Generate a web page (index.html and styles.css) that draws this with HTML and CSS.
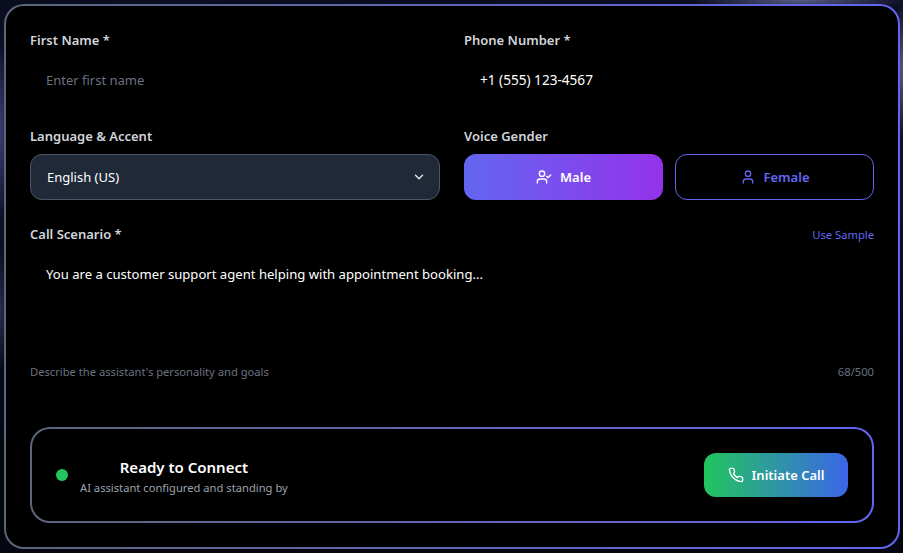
FILE: index.html
```html
<!DOCTYPE html>
<html lang="en">
<head>
    <meta charset="UTF-8">
    <meta name="viewport" content="width=device-width, initial-scale=1.0">
    <title>Call setup</title>
    <link rel="stylesheet" href="styles.css">
</head>
<body>
    <main class="panel">
        <div class="form-grid">
            <div class="field">
                <label class="field__label" for="firstName">First Name *</label>
                <input class="field__input" id="firstName" type="text" placeholder="Enter first name">
            </div>
            <div class="field">
                <label class="field__label" for="phone">Phone Number *</label>
                <input class="field__input field__input--phone" id="phone" type="text" value="+1 (555) 123-4567">
            </div>
            <div class="field">
                <label class="field__label" for="language">Language &amp; Accent</label>
                <div class="select-wrap">
                    <select class="select" id="language">
                        <option>English (US)</option>
                    </select>
                    <svg class="select-wrap__chevron" viewBox="0 0 24 24" width="14" height="14" fill="none" stroke="currentColor" stroke-width="2.4" stroke-linecap="round" stroke-linejoin="round"><path d="m6 9 6 6 6-6"/></svg>
                </div>
            </div>
            <div class="field">
                <span class="field__label">Voice Gender</span>
                <div class="gender">
                    <button class="gender__btn gender__btn--active" type="button">
                        <svg viewBox="0 0 24 24" width="16" height="16" fill="none" stroke="currentColor" stroke-width="2" stroke-linecap="round" stroke-linejoin="round"><path d="M16 21v-2a4 4 0 0 0-4-4H6a4 4 0 0 0-4 4v2"/><circle cx="9" cy="7" r="4"/><path d="m16 11 2 2 4-4"/></svg>
                        Male
                    </button>
                    <button class="gender__btn" type="button">
                        <svg viewBox="0 0 24 24" width="16" height="16" fill="none" stroke="currentColor" stroke-width="2" stroke-linecap="round" stroke-linejoin="round"><path d="M19 21v-2a4 4 0 0 0-4-4H9a4 4 0 0 0-4 4v2"/><circle cx="12" cy="7" r="4"/></svg>
                        Female
                    </button>
                </div>
            </div>
        </div>

        <section class="scenario">
            <div class="scenario__head">
                <label class="field__label" for="scenario">Call Scenario *</label>
                <a class="scenario__sample" href="#">Use Sample</a>
            </div>
            <textarea class="scenario__text" id="scenario" rows="4">You are a customer support agent helping with appointment booking...</textarea>
            <div class="scenario__foot">
                <span>Describe the assistant's personality and goals</span>
                <span>68/500</span>
            </div>
        </section>

        <section class="status">
            <div class="status__info">
                <span class="status__dot"></span>
                <div class="status__text">
                    <div class="status__title">Ready to Connect</div>
                    <div class="status__sub">AI assistant configured and standing by</div>
                </div>
            </div>
            <button class="call-btn" type="button">
                <svg viewBox="0 0 24 24" width="16" height="16" fill="none" stroke="currentColor" stroke-width="2" stroke-linecap="round" stroke-linejoin="round"><path d="M22 16.92v3a2 2 0 0 1-2.18 2 19.79 19.79 0 0 1-8.63-3.07 19.5 19.5 0 0 1-6-6 19.79 19.79 0 0 1-3.07-8.67A2 2 0 0 1 4.11 2h3a2 2 0 0 1 2 1.72 12.84 12.84 0 0 0 .7 2.81 2 2 0 0 1-.45 2.11L8.09 9.91a16 16 0 0 0 6 6l1.27-1.27a2 2 0 0 1 2.11-.45 12.84 12.84 0 0 0 2.81.7A2 2 0 0 1 22 16.92z"/></svg>
                Initiate Call
            </button>
        </section>
    </main>
</body>
</html>
```

FILE: styles.css
```css
* {
    box-sizing: border-box;
}

body {
    margin: 0;
    height: 553px;
    padding: 4px 3px 4px 4px;
    overflow: hidden;
    font-family: 'Noto Sans', 'Open Sans', sans-serif;
    color: #fff;
    background-color: #05060f;
    background-image:
        radial-gradient(ellipse 110px 14px at 800px 0, #565c85, transparent),
        radial-gradient(ellipse 12px 70px at 903px 70px, #565c85, transparent),
        radial-gradient(ellipse 12px 90px at 0 130px, #3a3f74, transparent),
        radial-gradient(ellipse 10px 60px at 0 310px, #2a2d4c, transparent),
        linear-gradient(#0a0c20, #10122c 30%, #05060f 85%);
}

.panel {
    height: 545px;
    padding: 24px;
    border: 2px solid transparent;
    border-radius: 20px;
    background:
        linear-gradient(#000, #000) padding-box,
        linear-gradient(90deg, #5b6778, #6366f1) border-box;
}

.form-grid {
    display: grid;
    grid-template-columns: 1fr 1fr;
    gap: 24px;
}

.field__label {
    display: block;
    height: 20px;
    font-size: 13px;
    font-weight: 600;
    line-height: 20px;
    color: #d1d5db;
}

.field__input {
    display: block;
    width: 100%;
    height: 44px;
    margin-top: 8px;
    padding: 0 16px;
    border: 0;
    outline: 0;
    background: transparent;
    font: inherit;
    font-size: 13px;
    color: #fff;
}

.field__input--phone {
    padding-bottom: 2px;
    font-size: 13.6px;
}

.field__input::placeholder {
    color: #6b7280;
}

.select-wrap {
    position: relative;
    margin-top: 8px;
}

.select {
    display: block;
    width: 100%;
    height: 46px;
    padding: 0 16px;
    border: 1px solid #4b5563;
    border-radius: 12px;
    outline: 0;
    appearance: none;
    background: #1f2937;
    font: inherit;
    font-size: 13px;
    color: #fff;
}

.select-wrap__chevron {
    position: absolute;
    top: 16px;
    right: 14px;
    color: #e5e7eb;
}

.gender {
    display: flex;
    gap: 12px;
    margin-top: 8px;
}

.gender__btn {
    display: flex;
    flex: 1;
    align-items: center;
    justify-content: center;
    gap: 8px;
    height: 46px;
    border: 1px solid #6366f1;
    border-radius: 12px;
    background: transparent;
    font: inherit;
    font-size: 13px;
    font-weight: 600;
    color: #6366f1;
}

.gender__btn--active {
    border-color: transparent;
    background: linear-gradient(90deg, #6366f1, #9333ea) border-box;
    color: #fff;
}

.scenario {
    margin-top: 24px;
}

.scenario__head {
    display: flex;
    align-items: center;
    justify-content: space-between;
}

.scenario__sample {
    font-size: 11.2px;
    color: #6366f1;
    text-decoration: none;
}

.scenario__text {
    display: block;
    width: 100%;
    height: 112px;
    margin-top: 8px;
    padding: 12px 16px;
    border: 0;
    outline: 0;
    resize: none;
    background: transparent;
    font: inherit;
    font-size: 13.1px;
    line-height: 20px;
    color: #fff;
}

.scenario__foot {
    display: flex;
    justify-content: space-between;
    font-size: 11.2px;
    line-height: 16px;
    color: #6b7280;
}

.status {
    display: flex;
    align-items: center;
    justify-content: space-between;
    height: 96px;
    margin-top: 47px;
    padding: 0 24px;
    border: 2px solid transparent;
    border-radius: 20px;
    background:
        linear-gradient(#000, #000) padding-box,
        linear-gradient(90deg, #5b6778, #6366f1) border-box;
}

.status__info {
    display: flex;
    align-items: center;
    gap: 12px;
}

.status__dot {
    width: 12px;
    height: 12px;
    border-radius: 50%;
    background: #22c55e;
}

.status__text {
    padding-top: 3px;
    text-align: center;
}

.status__title {
    margin-bottom: 3px;
    font-size: 15px;
    font-weight: 600;
    line-height: 20px;
}

.status__sub {
    font-size: 11.2px;
    line-height: 16px;
    color: #9ca3af;
}

.call-btn {
    display: flex;
    align-items: center;
    justify-content: center;
    gap: 8px;
    width: 144px;
    height: 44px;
    border: 0;
    border-radius: 12px;
    background: linear-gradient(90deg, #22c55e, #3b66e8);
    font: inherit;
    font-size: 13px;
    font-weight: 600;
    color: #fff;
}
```
